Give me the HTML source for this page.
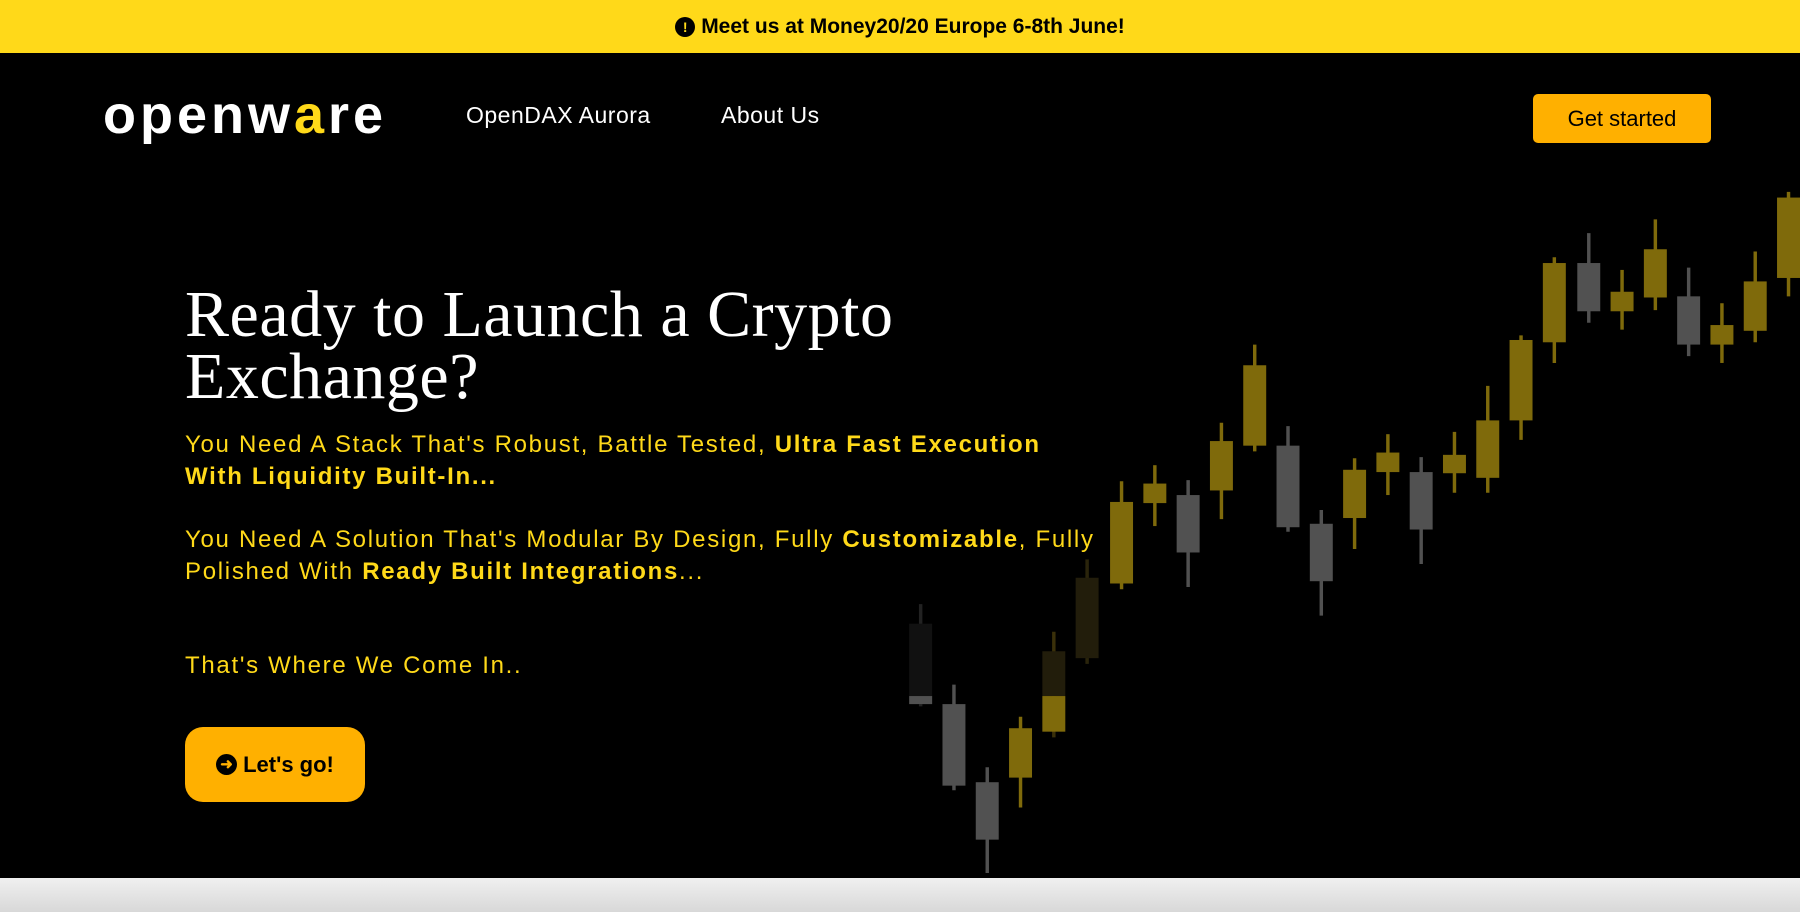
<!DOCTYPE html>
<html><head><meta charset="utf-8"><style>
*{margin:0;padding:0;box-sizing:border-box}
body{width:1800px;height:912px;background:#000;overflow:hidden;position:relative;font-family:"Liberation Sans",sans-serif}
.banner{position:absolute;left:0;top:0;width:1800px;height:53px;background:#ffd919;color:#000;font-weight:bold;font-size:21px;display:flex;align-items:center;justify-content:center;gap:6px}
.ic{display:inline-block;width:20px;height:20px;border-radius:50%;background:#000;color:#ffd919;font-size:14px;line-height:20px;text-align:center}
.abs{position:absolute;white-space:nowrap}
.logo{left:103px;top:84px;color:#fff;font-size:54px;font-weight:bold;letter-spacing:4px}
.nav{color:#fff;font-size:23px;top:102px;letter-spacing:0.5px}
.gs{left:1533px;top:94px;width:178px;height:49px;background:#ffb000;border-radius:5px;color:#000;font-size:22px;display:flex;align-items:center;justify-content:center}
h1{position:absolute;left:185px;top:284px;color:#fff;font-family:"Liberation Serif",serif;font-weight:normal;font-size:66px;line-height:62px;letter-spacing:0.5px}
.p{left:185px;color:#ffd919;font-size:24px;line-height:32px;letter-spacing:1.7px}
.p b{font-weight:bold}
.go{left:185px;top:727px;width:180px;height:75px;background:#ffb000;border-radius:18px;color:#000;font-weight:bold;font-size:22px;display:flex;align-items:center;justify-content:center;gap:6px}
.go .ic{background:#000;color:#ffb000;width:21px;height:21px;line-height:21px;font-size:15px}
.strip{position:absolute;left:0;top:878px;width:1800px;height:34px;background:linear-gradient(#f0f0f0,#d8d8d8)}
svg{position:absolute;left:0;top:0}
</style></head><body>
<div class="banner"><span class="ic">!</span>Meet us at Money20/20 Europe 6-8th June!</div>
<svg width="1800" height="912" viewBox="0 0 1568 794" preserveAspectRatio="none">
<g stroke-width="3">
<line x1="802" y1="526" x2="802" y2="615" stroke="#222"/><rect x="792" y="543" width="20" height="70" fill="#111"/><rect x="792" y="606" width="20" height="7" fill="#515151"/>
<line x1="831" y1="596" x2="831" y2="688" stroke="#515151"/><rect x="821" y="613" width="20" height="71" fill="#515151"/>
<line x1="860" y1="668" x2="860" y2="760" stroke="#515151"/><rect x="850" y="681" width="20" height="50" fill="#515151"/>
<line x1="889" y1="624" x2="889" y2="703" stroke="#7f6a0b"/><rect x="879" y="634" width="20" height="43" fill="#7f6a0b"/>
<line x1="918" y1="550" x2="918" y2="642" stroke="#3a300a"/><rect x="908" y="567" width="20" height="39" fill="#221d0b"/><rect x="908" y="606" width="20" height="31" fill="#7f6a0b"/>
<line x1="947" y1="487" x2="947" y2="578" stroke="#2a240b"/><rect x="937" y="503" width="20" height="70" fill="#221d0b"/>
<line x1="977" y1="419" x2="977" y2="513" stroke="#7f6a0b"/><rect x="967" y="437" width="20" height="71" fill="#7f6a0b"/>
<line x1="1006" y1="405" x2="1006" y2="458" stroke="#7f6a0b"/><rect x="996" y="421" width="20" height="17" fill="#7f6a0b"/>
<line x1="1035" y1="418" x2="1035" y2="511" stroke="#515151"/><rect x="1025" y="431" width="20" height="50" fill="#515151"/>
<line x1="1064" y1="368" x2="1064" y2="452" stroke="#7f6a0b"/><rect x="1054" y="384" width="20" height="43" fill="#7f6a0b"/>
<line x1="1093" y1="300" x2="1093" y2="393" stroke="#7f6a0b"/><rect x="1083" y="318" width="20" height="70" fill="#7f6a0b"/>
<line x1="1122" y1="371" x2="1122" y2="463" stroke="#515151"/><rect x="1112" y="388" width="20" height="71" fill="#515151"/>
<line x1="1151" y1="444" x2="1151" y2="536" stroke="#515151"/><rect x="1141" y="456" width="20" height="50" fill="#515151"/>
<line x1="1180" y1="399" x2="1180" y2="478" stroke="#7f6a0b"/><rect x="1170" y="409" width="20" height="42" fill="#7f6a0b"/>
<line x1="1209" y1="378" x2="1209" y2="431" stroke="#7f6a0b"/><rect x="1199" y="394" width="20" height="17" fill="#7f6a0b"/>
<line x1="1238" y1="398" x2="1238" y2="491" stroke="#515151"/><rect x="1228" y="411" width="20" height="50" fill="#515151"/>
<line x1="1267" y1="376" x2="1267" y2="429" stroke="#7f6a0b"/><rect x="1257" y="396" width="20" height="16" fill="#7f6a0b"/>
<line x1="1296" y1="336" x2="1296" y2="429" stroke="#7f6a0b"/><rect x="1286" y="366" width="20" height="50" fill="#7f6a0b"/>
<line x1="1325" y1="292" x2="1325" y2="383" stroke="#7f6a0b"/><rect x="1315" y="296" width="20" height="70" fill="#7f6a0b"/>
<line x1="1354" y1="224" x2="1354" y2="316" stroke="#7f6a0b"/><rect x="1344" y="229" width="20" height="69" fill="#7f6a0b"/>
<line x1="1384" y1="203" x2="1384" y2="281" stroke="#515151"/><rect x="1374" y="229" width="20" height="42" fill="#515151"/>
<line x1="1413" y1="235" x2="1413" y2="287" stroke="#7f6a0b"/><rect x="1403" y="254" width="20" height="17" fill="#7f6a0b"/>
<line x1="1442" y1="191" x2="1442" y2="270" stroke="#7f6a0b"/><rect x="1432" y="217" width="20" height="42" fill="#7f6a0b"/>
<line x1="1471" y1="233" x2="1471" y2="310" stroke="#515151"/><rect x="1461" y="258" width="20" height="42" fill="#515151"/>
<line x1="1500" y1="264" x2="1500" y2="316" stroke="#7f6a0b"/><rect x="1490" y="283" width="20" height="17" fill="#7f6a0b"/>
<line x1="1529" y1="219" x2="1529" y2="298" stroke="#7f6a0b"/><rect x="1519" y="245" width="20" height="43" fill="#7f6a0b"/>
<line x1="1558" y1="167" x2="1558" y2="258" stroke="#7f6a0b"/><rect x="1548" y="172" width="20" height="70" fill="#7f6a0b"/>
</g></svg>
<div class="abs logo">openw<span style="color:#ffd919">a</span>re</div>
<div class="abs nav" style="left:466px">OpenDAX Aurora</div>
<div class="abs nav" style="left:721px">About Us</div>
<div class="abs gs">Get started</div>
<h1>Ready to Launch a Crypto<br>Exchange?</h1>
<div class="abs p" style="top:429px">You Need A Stack That's Robust, Battle Tested, <b>Ultra Fast Execution<br>With Liquidity Built-In...</b></div>
<div class="abs p" style="top:524px">You Need A Solution That's Modular By Design, Fully <b>Customizable</b>, Fully<br>Polished With <b>Ready Built Integrations</b>...</div>
<div class="abs p" style="top:650px">That's Where We Come In..</div>
<div class="abs go"><span class="ic">➜</span>Let's go!</div>
<div class="strip"></div>
</body></html>
